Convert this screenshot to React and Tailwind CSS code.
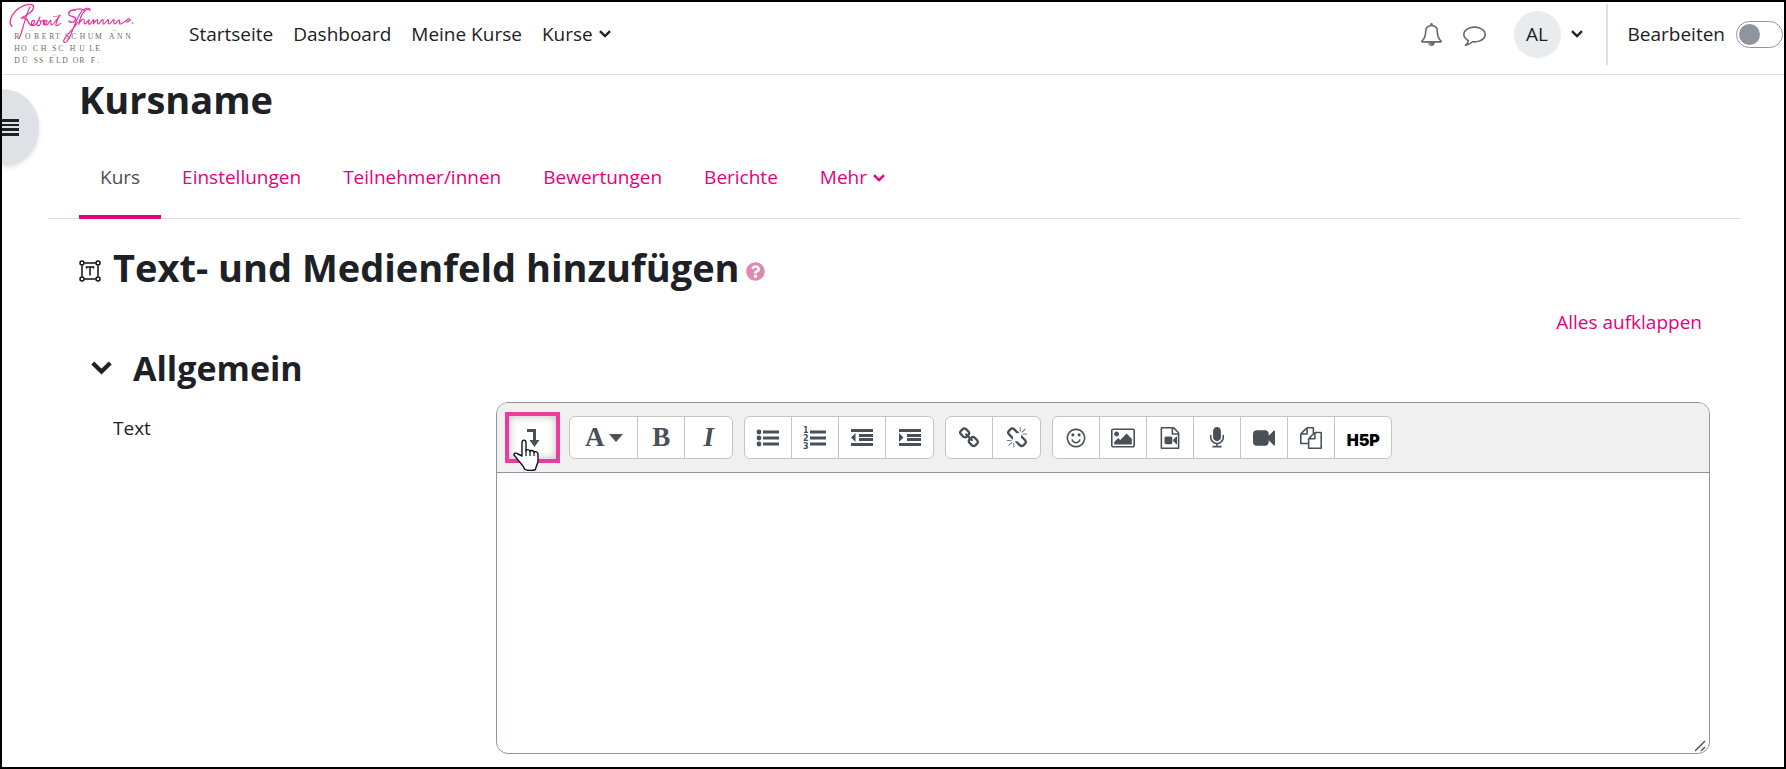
import { useState } from "react";
import { FaQuestionCircle } from "react-icons/fa";

const navLinks = ["Startseite", "Dashboard", "Meine Kurse"];
const tabs = ["Einstellungen", "Teilnehmer/innen", "Bewertungen", "Berichte"];

const paths = {
  bell: "M912 1696q0-16-16-16-59 0-101.5-42.5t-42.5-101.5q0-16-16-16t-16 16q0 73 51.5 124.5t124.5 51.5q16 0 16-16zm-666-288h1300q-266-300-266-832 0-51-24-105t-69-103-121.5-80.5-169.5-31.5-169.5 31.5-121.5 80.5-69 103-24 105q0 532-266 832zm1482 0q0 52-38 90t-90 38h-448q0 106-75 181t-181 75-181-75-75-181h-448q-52 0-90-38t-38-90q50-42 91-88t85-119.5 74.5-158.5 50-206 19.5-260q0-152 117-282.5t307-158.5q-8-19-8-39 0-40 28-68t68-28 68 28 28 68q0 20-8 39 190 28 307 158.5t117 282.5q0 139 19.5 260t50 206 74.5 158.5 85 119.5 91 88z",
  comment: "M896 384q-204 0-381.5 69.5t-282 187.5-104.5 255q0 112 71.5 213.5t201.5 175.5l87 50-27 96q-24 91-70 172 152-63 275-171l43-38 57 6q69 8 130 8 204 0 381.5-69.5t282-187.5 104.5-255-104.5-255-282-187.5-381.5-69.5zm896 512q0 174-120 321.5t-326 233-450 85.5q-70 0-145-8-198 175-460 242-49 14-114 22h-5q-15 0-27-10.5t-16-27.5v-1q-3-4-.5-12t2-10 4.5-9.5l6-9 7-8.5 8-9q7-8 31-34.5t34.5-38 31-39.5 32.5-51 27-59 26-76q-157-89-247.5-220t-90.5-281q0-174 120-321.5t326-233 450-85.5 450 85.5 326 233 120 321.5z",
  link: "M1520 1216q0-40-28-68l-208-208q-28-28-68-28-42 0-72 32 3 3 19 18.5t21.5 21.5 15 19 13 25.5 3.5 27.5q0 40-28 68t-68 28q-15 0-27.5-3.5t-25.5-13-19-15-21.5-21.5-18.5-19q-33 31-33 73 0 40 28 68l206 207q27 27 68 27 40 0 68-26l147-146q28-28 28-67zm-703-705q0-40-28-68l-206-207q-28-28-68-28-39 0-68 27l-147 146q-28 28-28 67 0 40 28 68l208 208q27 27 68 27 42 0 72-31-3-3-19-18.5t-21.5-21.5-15-19-13-25.5-3.5-27.5q0-40 28-68t68-28q15 0 27.5 3.5t25.5 13 19 15 21.5 21.5 18.5 19q33-31 33-73zm895 705q0 120-85 203l-147 146q-83 83-203 83-121 0-204-85l-206-207q-83-83-83-203 0-123 88-209l-88-88q-86 88-208 88-120 0-204-84l-208-208q-84-84-84-204t85-203l147-146q83-83 203-83 121 0 204 85l206 207q83 83 83 203 0 123-88 209l88 88q86-88 208-88 120 0 204 84l208 208q84 84 84 204z",
  unlink: "M503 1271l-256 256q-10 9-23 9-12 0-23-9-9-10-9-23t9-23l256-256q10-9 23-9t23 9q9 10 9 23t-9 23zm169 41v320q0 14-9 23t-23 9-23-9-9-23v-320q0-14 9-23t23-9 23 9 9 23zm-224-224q0 14-9 23t-23 9h-320q-14 0-23-9t-9-23 9-23 23-9h320q14 0 23 9t9 23zm1264 128q0 120-85 203l-147 146q-83 83-203 83-121 0-204-85l-334-335q-21-21-42-56l239-18 273 274q28 28 68 27.5t68-27.5l147-146q28-28 28-67 0-40-28-68l-274-275 18-239q35 21 56 42l336 336q84 86 84 204zm-617-724l-239 18-273-274q-28-28-68-28-39 0-68 27l-147 146q-28 28-28 67 0 40 28 68l274 274-18 240q-35-21-56-42l-336-336q-84-86-84-204 0-120 85-203l147-146q83-83 203-83 121 0 204 85l334 335q21 21 42 56zm633 84q0 14-9 23t-23 9h-320q-14 0-23-9t-9-23 9-23 23-9h320q14 0 23 9t9 23zm-544-544v320q0 14-9 23t-23 9-23-9-9-23v-320q0-14 9-23t23-9 23 9 9 23zm407 151l-256 256q-11 9-23 9t-23-9q-9-10-9-23t9-23l256-256q10-9 23-9t23 9q9 10 9 23t-9 23z",
  smile: "M1262 1075q-37 121-138 195t-228 74-228-74-138-195q-8-25 4-48.5t38-31.5q25-8 48.5 4t31.5 38q25 80 92.5 129.5t151.5 49.5 151.5-49.5 92.5-129.5q8-26 32-38t49-4 37 31.5 4 48.5zm-494-435q0 53-37.5 90.5t-90.5 37.5-90.5-37.5-37.5-90.5 37.5-90.5 90.5-37.5 90.5 37.5 37.5 90.5zm512 0q0 53-37.5 90.5t-90.5 37.5-90.5-37.5-37.5-90.5 37.5-90.5 90.5-37.5 90.5 37.5 37.5 90.5zm256 256q0-130-51-248.5t-136.5-204-204-136.5-248.5-51-248.5 51-204 136.5-136.5 204-51 248.5 51 248.5 136.5 204 204 136.5 248.5 51 248.5-51 204-136.5 136.5-204 51-248.5zm128 0q0 209-103 385.5t-279.5 279.5-385.5 103-385.5-103-279.5-279.5-103-385.5 103-385.5 279.5-279.5 385.5-103 385.5 103 279.5 279.5 103 385.5z",
  image: "M576 576q0 80-56 136t-136 56-136-56-56-136 56-136 136-56 136 56 56 136zm1024 384v448h-1408v-192l320-320 160 160 512-512zm96-704h-1600q-13 0-22.5 9.5t-9.5 22.5v1216q0 13 9.5 22.5t22.5 9.5h1600q13 0 22.5-9.5t9.5-22.5v-1216q0-13-9.5-22.5t-22.5-9.5zm160 32v1216q0 66-47 113t-113 47h-1600q-66 0-113-47t-47-113v-1216q0-66 47-113t113-47h1600q66 0 113 47t47 113z",
  fileVideo: "M1596 380q28 28 48 76t20 88v1152q0 40-28 68t-68 28h-1344q-40 0-68-28t-28-68v-1600q0-40 28-68t68-28h896q40 0 88 20t76 48zm-444-244v376h376q-10-29-22-41l-313-313q-12-12-41-22zm384 1528v-1024h-416q-40 0-68-28t-28-68v-416h-768v1536h1280zm-576-896q52 0 90 38t38 90v384q0 52-38 90t-90 38h-384q-52 0-90-38t-38-90v-384q0-52 38-90t90-38h384zm492 2q20 8 20 30v576q0 22-20 30-8 2-12 2-14 0-23-9l-265-266v-90l265-266q9-9 23-9 4 0 12 2z",
  microphone: "M1472 704v128q0 221-147.5 384.5t-364.5 187.5v132h256q26 0 45 19t19 45-19 45-45 19h-640q-26 0-45-19t-19-45 19-45 45-19h256v-132q-217-24-364.5-187.5t-147.5-384.5v-128q0-26 19-45t45-19 45 19 19 45v128q0 185 131.5 316.5t316.5 131.5 316.5-131.5 131.5-316.5v-128q0-26 19-45t45-19 45 19 19 45zm-256-384v512q0 132-94 226t-226 94-226-94-94-226v-512q0-132 94-226t226-94 226 94 94 226z",
  camera: "M1792 352v1088q0 42-39 59-13 5-25 5-27 0-45-19l-403-403v166q0 119-84.5 203.5t-203.5 84.5h-704q-119 0-203.5-84.5t-84.5-203.5v-704q0-119 84.5-203.5t203.5-84.5h704q119 0 203.5 84.5t84.5 203.5v165l403-402q18-19 45-19 12 0 25 5 39 17 39 59z",
  files: "M1696 384q40 0 68 28t28 68v1216q0 40-28 68t-68 28h-960q-40 0-68-28t-28-68v-288h-544q-40 0-68-28t-28-68v-672q0-40 20-88t48-76l408-408q28-28 76-48t88-20h416q40 0 68 28t28 68v328q68-40 128-40h416zm-544 213l-299 299h299v-299zm-640-384l-299 299h299v-299zm196 647l316-316v-416h-384v416q0 40-28 68t-68 28h-416v640h512v-256q0-40 20-88t48-76zm956 804v-1152h-384v416q0 40-28 68t-68 28h-416v640h896z",
};

function Icon({ name, className = "size-[22px]", viewBox = "0 0 1792 1792" }) {
  return (
    <svg viewBox={viewBox} fill="currentColor" className={className} aria-hidden="true">
      <path d={paths[name]} />
    </svg>
  );
}

function Chevron({ className = "h-2 w-3" }) {
  return (
    <svg viewBox="0 0 12 8" fill="none" stroke="currentColor" strokeWidth="2.4" className={className} aria-hidden="true">
      <path d="M1 1.2 6 6l5-4.8" />
    </svg>
  );
}

function Logo() {
  return (
    <a href="#" aria-label="Robert Schumann Hochschule Düsseldorf" className="block shrink-0">
      <svg viewBox="6 6 420 192" className="h-16 w-[140px]">
        <g fill="none" stroke="#aaaaa2" strokeWidth="1.5">
          <path d="M86 93q8-5 17 0M335 93q8-5 17 0M155 165h15" />
        </g>
        <g fill="none" stroke="#e6309a" strokeWidth="3.4" strokeLinecap="round" strokeLinejoin="round">
          <path d="M36 79C24 70 32 42 58 24c20-13 43-14 43-4 0 12-18 26-37 34 10-2 16 1 19 8 3 7 6 13 12 14" strokeWidth="4" />
          <path d="M90 20c-10 20-14 38-20 58-4 16-8 28-13 38" />
          <path d="M94 76c8 0 13-15 7-15-7 0-10 16-2 16 8-1 14-8 21-26-8 16-13 26-6 26 8 0 11-14 5-15 6 4 11 0 13-2-2 6-3 15 1 15 7 0 10-14 6-14-7 0-8 14 0 14 7 0 9-15 13-14 3 1-2 14 3 14 6 0 13-12 24-29-8 15-14 31-10 31 4 1 8-3 12-7" />
          <path d="M160 50l22-3" strokeWidth="2" />
          <path d="M226 31c-12-5-22 5-19 13 3 7 19 4 20 13 0 9-14 14-20 6M217 31c17-6 28-7 35 0" strokeWidth="4" />
          <path d="M246 32c-15 20-22 44-33 70-7 20-19 32-22 22-1-14 29-32 42-58" />
          <path d="M270 27c-14-1-28 14-34 46 5-12 12-18 16-14 3 5-3 13 3 13 6-2 8-11 13-13-2 6-4 14 1 14 6-2 8-15 12-14 3 1-3 12-1 13 3-3 8-14 12-13 3 1-2 13 3 13 5-1 7-13 13-13 5 1-3 13 3 13 6 0 10-13 14-13 3 2-3 13 2 13 6 0 9-12 14-13 4 0-3 12 3 13 5 0 8-12 14-12 3 1-2 12 3 12 10 0 21-18 28-15 5 2-3 9-10 9" />
          <path d="M250 31c7-9 20-8 20 1M397 69l1 1" />
        </g>
        <g fill="#6d6d62" fontFamily="Liberation Serif, serif" fontSize="23">
          <text x="43 75 102 125 148 166 195 214 239 263 285 327 351 376" y="118">ROBERTSCHUMANN</text>
          <text x="43 63 99 122 157 175 209 238 268 286" y="154">HOCHSCHULE</text>
          <text x="43 66 101 117 147 168 187 218 238 272 292" y="190">DÜSSELDORF.</text>
        </g>
      </svg>
    </a>
  );
}

function ListIcon({ type }) {
  return (
    <svg viewBox="0 0 24 24" fill="currentColor" className="size-6 overflow-visible" aria-hidden="true">
      {type === "ul" && (
        <>
          <circle cx="3" cy="6" r="2.4" />
          <circle cx="3" cy="12" r="2.4" />
          <circle cx="3" cy="18" r="2.4" />
        </>
      )}
      {type === "ol" && (
        <g fontFamily="DejaVu Sans, sans-serif" fontSize="8" fontWeight="bold">
          <text x="0" y="7">1</text>
          <text x="0" y="15">2</text>
          <text x="0" y="23">3</text>
        </g>
      )}
      {(type === "ul" || type === "ol") && <path d="M7 4.5h16v3H7zM7 10.5h16v3H7zM7 16.5h16v3H7z" />}
      {(type === "outdent" || type === "indent") && (
        <path d="M1 3h22v3H1zM9 8h14v3H9zM9 12h14v3H9zM1 17h22v3H1z" />
      )}
      {type === "outdent" && <path d="M5.5 7v9L1 11.5z" />}
      {type === "indent" && <path d="M1 7v9l4.5-4.5z" />}
    </svg>
  );
}

function ToolGroup({ children }) {
  return (
    <div className="flex h-[43px] divide-x divide-[#c4c4c4] rounded-md border border-[#c4c4c4] bg-white">
      {children}
    </div>
  );
}

function Tool({ label, children, className = "w-[47px]" }) {
  return (
    <button type="button" aria-label={label} className={`flex items-center justify-center ${className}`}>
      {children}
    </button>
  );
}

function Editor() {
  return (
    <div className="relative flex-1 overflow-hidden rounded-xl border border-[#8f959e] bg-white">
      <div className="flex h-[70px] items-center gap-[11px] border-b border-[#8f959e] bg-[#f0f0f0] px-2 text-[#495057]">
        <button
          type="button"
          aria-label="Mehr Symbole anzeigen"
          className="relative -mr-0.5 flex h-[51px] w-[55px] items-center justify-center border-4 border-[#ea3c9f] bg-white shadow-[inset_0_0_8px_#bbbbbb]"
        >
          <svg viewBox="0 0 14 20" className="h-5 w-3.5" aria-hidden="true">
            <path d="M1 1h9v11h3.5L8.5 19l-5-7H7V4H1z" fill="currentColor" />
          </svg>
          <svg viewBox="0 0 26 32" className="absolute left-1 top-[23px] h-8 w-[26px]" aria-hidden="true">
            <path
              d="M9 17V3.5C9 .3 13 .3 13 3.5V12c.5-2 3.8-1.7 4 .5.7-1.7 3.6-1.2 4 .8 1-1.3 4-.5 4 1.7v7c0 3-2 4.5-2.5 8.500-3 1.500-8 1.500-11-.5-1-3.500-4-5.500-6.500-9-1.500-2.500-3-3.500-4-5-.5-2 2.500-2.500 4-1z"
              fill="#fff"
              stroke="#111122"
              strokeWidth="1.4"
              strokeLinejoin="round"
            />
            <path d="M13 11v6M17 12v5M21 13v4" stroke="#111122" strokeWidth="1.2" />
          </svg>
        </button>
        <ToolGroup>
          <Tool label="Absatzstile" className="w-[68px] gap-1">
            <span className="font-['Liberation_Serif',serif] text-[27px] font-bold leading-none">A</span>
            <svg viewBox="0 0 14 8" className="h-2 w-3.5" aria-hidden="true">
              <path d="M0 0h14L7 8z" fill="currentColor" />
            </svg>
          </Tool>
          <Tool label="Fett">
            <span className="font-['Liberation_Serif',serif] text-[27px] font-bold leading-none">B</span>
          </Tool>
          <Tool label="Kursiv">
            <span className="font-['Liberation_Serif',serif] text-[27px] font-bold italic leading-none">I</span>
          </Tool>
        </ToolGroup>
        <ToolGroup>
          <Tool label="Ungeordnete Liste"><ListIcon type="ul" /></Tool>
          <Tool label="Geordnete Liste"><ListIcon type="ol" /></Tool>
          <Tool label="Ausrücken"><ListIcon type="outdent" /></Tool>
          <Tool label="Einrücken"><ListIcon type="indent" /></Tool>
        </ToolGroup>
        <ToolGroup>
          <Tool label="Link"><Icon name="link" /></Tool>
          <Tool label="Link aufheben"><Icon name="unlink" /></Tool>
        </ToolGroup>
        <ToolGroup>
          <Tool label="Emoji"><Icon name="smile" /></Tool>
          <Tool label="Bild"><Icon name="image" className="size-6" viewBox="-64 0 1920 1792" /></Tool>
          <Tool label="Medien"><Icon name="fileVideo" /></Tool>
          <Tool label="Audio aufnehmen"><Icon name="microphone" /></Tool>
          <Tool label="Video aufnehmen"><Icon name="camera" /></Tool>
          <Tool label="Dateien verwalten"><Icon name="files" /></Tool>
          <Tool label="H5P" className="w-14">
            <span className="pt-1 font-['Inter',sans-serif] text-[16px] font-black leading-none text-black">H5P</span>
          </Tool>
        </ToolGroup>
      </div>
      <textarea id="editor-text" className="block h-[280px] w-full resize-none p-3 text-[19px] outline-none" />
      <svg viewBox="0 0 12 12" className="absolute bottom-px right-0.5 size-3" stroke="#555555" strokeWidth="1.5" aria-hidden="true">
        <path d="M0 11 10 1M6 11l4-4" />
      </svg>
    </div>
  );
}

export default function App() {
  const [editing, setEditing] = useState(false);

  return (
    <div className="min-h-screen overflow-hidden border-2 border-black bg-white font-['Open_Sans','Noto_Sans',sans-serif] text-[19px] leading-[30px] text-[#1d2125]">
      <header className="flex h-[73px] items-start border-b border-[#dee2e6]">
        <Logo />
        <nav className="ml-[47px] flex h-16 items-center gap-5">
          {navLinks.map((link) => (
            <a key={link} href="#">{link}</a>
          ))}
          <button type="button" className="flex items-center gap-1.5">
            Kurse <Chevron />
          </button>
        </nav>
        <div className="ml-auto flex h-16 items-center">
          <button type="button" aria-label="Mitteilungen" className="mr-5 text-[#6a6a6a]">
            <Icon name="bell" className="size-[23px]" />
          </button>
          <button type="button" aria-label="Nachrichten" className="mr-7 text-[#6a6a6a]">
            <Icon name="comment" className="size-[23px]" />
          </button>
          <button type="button" className="flex items-center gap-2.5">
            <span className="flex size-[47px] items-center justify-center rounded-full bg-[#e9ecef]">AL</span>
            <Chevron />
          </button>
          <div className="ml-[23px] h-[61px] w-0.5 bg-[#dee2e6]" />
          <label htmlFor="edit-mode" className="ml-5">Bearbeiten</label>
          <input
            id="edit-mode"
            type="checkbox"
            role="switch"
            checked={editing}
            onChange={() => setEditing(!editing)}
            className="ml-[11px] mr-px flex h-[27px] w-[47px] appearance-none items-center rounded-full border border-[#8f959e] bg-white px-0.5 before:size-[21px] before:rounded-full before:bg-[#8f959e] checked:before:ml-auto"
          />
        </div>
      </header>

      <main className="relative pl-[46px] pr-[43px]">
        <button
          type="button"
          aria-label="Kursindex öffnen"
          className="absolute left-0 top-3.5 flex h-[76px] w-[37px] items-center rounded-r-full bg-[#dee2e6] shadow-md"
        >
          <svg viewBox="0 0 17 17" className="size-[17px]" aria-hidden="true">
            <path d="M0 0h17v3H0zM0 5h17v2H0zM0 9h17v3H0zM0 14h17v3H0z" fill="#1d2125" />
          </svg>
        </button>

        <h1 className="pl-[31px] text-[38px] font-bold leading-[48px]">Kursname</h1>
        <nav className="mt-[21px] flex h-[75px] border-b border-[#dee2e6] px-[31px] text-[#e6007e]">
          <a href="#" className="-mb-px border-b-4 border-[#e6007e] px-[21px] pt-[18px] text-[#495057]">Kurs</a>
          {tabs.map((tab) => (
            <a key={tab} href="#" className="px-[21px] pt-[18px]">{tab}</a>
          ))}
          <button type="button" className="flex items-start gap-1.5 px-[21px] pt-[18px]">
            Mehr <Chevron className="mt-3 h-2 w-3" />
          </button>
        </nav>

        <div className="px-[31px]">
          <h2 className="mt-[22px] flex items-center text-[38px] font-bold leading-[52px]">
            <svg viewBox="0 0 22 22" fill="none" stroke="#111" strokeWidth="1.5" className="mr-3 mt-2 size-[22px]" aria-hidden="true">
              <path d="M5.5 3h11M5.5 19h11M3 5.5v11M19 5.5v11" />
              <circle cx="3" cy="3" r="2" />
              <circle cx="19" cy="3" r="2" />
              <circle cx="3" cy="19" r="2" />
              <circle cx="19" cy="19" r="2" />
              <path d="M7.5 8.5V7h7v1.5M11 7v8.5" />
            </svg>
            Text- und Medienfeld hinzufügen
            <button type="button" aria-label="Hilfe" className="ml-1.5 mt-2 text-[#df89ad]">
              <FaQuestionCircle className="size-[19px]" />
            </button>
          </h2>
          <div className="mt-3.5 flex justify-end pr-2">
            <a href="#" className="text-[#e6007e]">Alles aufklappen</a>
          </div>
          <h3 className="mt-2 flex items-center gap-[21px] pl-3 text-[34px] font-bold leading-[46px]">
            <button type="button" aria-label="Allgemein einklappen">
              <Chevron className="h-3.5 w-[21px]" />
            </button>
            Allgemein
          </h3>
          <div className="mt-[11px] flex items-start pl-[34px]">
            <label htmlFor="editor-text" className="w-[24%] pt-[11px]">Text</label>
            <Editor />
          </div>
        </div>
      </main>
    </div>
  );
}
